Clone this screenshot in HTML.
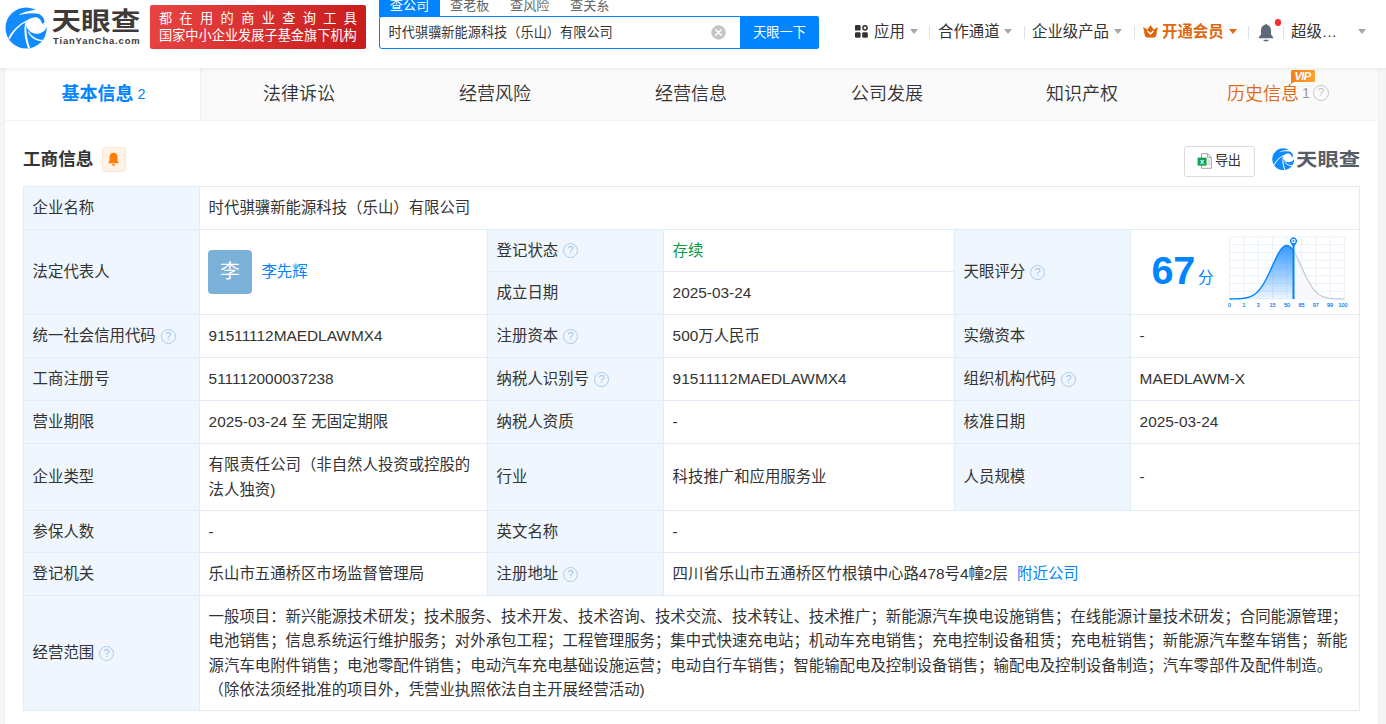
<!DOCTYPE html>
<html lang="zh-CN">
<head>
<meta charset="utf-8">
<title>天眼查</title>
<style>
*{box-sizing:border-box;margin:0;padding:0}
html,body{width:1386px;height:724px;overflow:hidden;background:#f5f5f5;font-family:"Liberation Sans","Noto Sans CJK SC",sans-serif;color:#333;font-size:14px}
.abs{position:absolute}
#hdr{position:absolute;left:0;top:0;width:1386px;height:68px;background:#fff;box-shadow:0 1px 5px rgba(0,0,0,.075);z-index:5}
#main{position:absolute;left:5px;top:68px;width:1373px;box-shadow:0 0 1px rgba(0,0,0,.12);height:660px;background:#fff}
#tabs{position:absolute;left:0;top:0;width:1373px;height:53px;background:#fafafa;border-bottom:1px solid #f3f3f3}
.tab{position:absolute;top:0;height:52px;width:196px;text-align:center;font-size:18px;line-height:53.4px;color:#333;white-space:nowrap;font-weight:350}
.tab.on{background:#fff;color:#0084ff;font-weight:bold;border-right:1px solid #f0f0f0;padding-left:2px}
.tab small{font-size:14.3px;font-weight:normal;margin-left:4px;position:relative;top:-1px}

.stab{top:-5px;font-size:13.2px;line-height:21.4px;color:#666;white-space:nowrap}
.nv{top:21px;font-size:15.4px;line-height:22px;color:#333;white-space:nowrap}
.ct{top:29px;width:0;height:0;border:4px solid transparent;border-top:5px solid #a6a6a6;border-bottom:0}
.sp{top:26px;width:1px;height:13px;background:#dde1e8}

.av{position:relative;top:-1px;margin-left:-.8px;display:inline-block;width:44px;height:44px;border-radius:4px;background:#7bb0d9;color:#fff;font-size:19.8px;line-height:42px;text-align:center;vertical-align:middle}
.nm{display:inline-block;vertical-align:middle;margin-left:9.6px}
.sc{font-size:39.6px;font-weight:bold;color:#0084ff;line-height:40px;margin-left:12px;letter-spacing:-.3px;vertical-align:middle;position:relative;top:-2.6px}
.fen{font-size:15.4px;color:#0084ff;margin-left:3px;vertical-align:middle;position:relative;top:6px}
/* table */
#tb{position:absolute;left:18px;top:118px;width:1336px;border-collapse:collapse;table-layout:fixed;font-size:15.4px;line-height:24.2px;color:#333}
#tb td{border:1px solid #e2ecf6;padding:1px 9px 0 8.6px;vertical-align:middle;background:#fff;white-space:nowrap}
#tb td.l{background:#eff6fd}
#tb td.w{white-space:normal}
.q{display:inline-block;width:15px;height:15px;border:1px solid #aacbec;border-radius:50%;vertical-align:-2px;margin-left:5px;position:relative;top:-3.5px;color:#9dc3ea;font-size:11px;line-height:13px;text-align:center;font-family:"Liberation Sans",sans-serif}
a{color:#0084ff;text-decoration:none}
</style>
</head>
<body>
<div id="hdr">

<svg class="abs" style="left:5px;top:6.5px" width="42" height="42" viewBox="0 0 42 42">
 <circle cx="21.1" cy="21" r="20.6" fill="#128bff"/>
 <path d="M13.5,8.2 C18.5,6.9 26,5.3 33.7,6.7 C37,8.3 39.3,11 39.5,14.4 C39.3,15.8 38.4,16.5 37.1,16.8 L43,19.4 L43,-1 L31.6,2.7 C25,3.5 18,4.9 13.5,8.2Z" fill="#fff"/>
 <path d="M21.7,13.8 C23.5,12 25.9,10.7 30.6,10.2 C33.5,10.2 36.2,12.6 37.1,16.8 L43,19.3 L43,19.9 L41.6,19.9 C40.6,23.5 37,26.7 31,26.7 C27,26.7 22.6,23.6 21.4,19.6 C21,17.6 21,15.6 21.7,13.8Z" fill="#fff"/>
 <path d="M21.9,13.3 C13,17.6 7,24 3.4,31 L4.7,32.5 C8.5,25 14,18.6 22.4,14.3Z M20.2,15.6 C18.5,24 19.9,33 23.1,41.2 L25.1,40.8 C22,33 20.6,24 21.7,15.6Z M22.7,24.4 C25,30.2 30.5,33.8 37,34.2 L37.9,32.8 C31.6,32.4 26.6,29.6 23.7,24.4Z" fill="#fff"/>
</svg>
<div class="abs" style="left:51.5px;top:0.5px;font-size:29.6px;line-height:42px;font-weight:700;color:#3e3a39;letter-spacing:0px;white-space:nowrap;transform:scaleY(.84);transform-origin:0 50%">天眼查</div>
<div class="abs" style="left:53px;top:35px;font-size:9.4px;line-height:12px;font-weight:bold;color:#3e3a39;letter-spacing:.86px;white-space:nowrap">TianYanCha.com</div>
<div class="abs" style="left:150px;top:5px;width:216px;height:44px;border-radius:2px;background:linear-gradient(105deg,#e84444,#c81b1b);color:#fff;font-size:13.2px;line-height:17.4px;font-weight:400;padding:4.6px 0 0 9px;white-space:nowrap">
 <div style="letter-spacing:7.35px">都在用的商业查询工具</div>
 <div>国家中小企业发展子基金旗下机构</div>
</div>
<div class="abs" style="left:379px;top:-5px;width:61px;height:22px;background:#0084ff;color:#fff;font-size:13.2px;line-height:21.4px;text-align:center;border-radius:2px 2px 0 0">查公司</div>
<div class="abs stab" style="left:450px">查老板</div>
<div class="abs stab" style="left:510px">查风险</div>
<div class="abs stab" style="left:570px">查关系</div>
<div class="abs" style="left:379px;top:16px;width:362px;height:33px;border:1px solid #0084ff;border-radius:3px 0 0 3px;font-size:13.2px;line-height:32.2px;padding-left:8.6px;color:#333;white-space:nowrap">时代骐骥新能源科技（乐山）有限公司</div>
<svg class="abs" style="left:711px;top:25px" width="15" height="15" viewBox="0 0 15 15"><circle cx="7.5" cy="7.5" r="7.2" fill="#c4c4c4"/><path d="M4.7,4.7 L10.3,10.3 M10.3,4.7 L4.7,10.3" stroke="#fff" stroke-width="1.5" stroke-linecap="round"/></svg>
<div class="abs" style="left:740px;top:16px;width:79px;height:33px;background:#0084ff;color:#fff;font-size:13.2px;line-height:33.4px;text-align:center;border-radius:0 2px 2px 0">天眼一下</div>
<svg class="abs" style="left:855px;top:25px" width="13" height="13" viewBox="0 0 13 13"><rect x="0" y="0" width="5.6" height="5.6" rx="1.2" fill="#333"/><rect x="0" y="7.2" width="5.6" height="5.6" rx="1.2" fill="#333"/><rect x="7.2" y="7.2" width="5.6" height="5.6" rx="1.2" fill="#333"/><circle cx="10" cy="2.8" r="2.1" fill="none" stroke="#333" stroke-width="1.5"/></svg>
<div class="abs nv" style="left:874px">应用</div><i class="abs ct" style="left:910px"></i><i class="abs sp" style="left:929px"></i>
<div class="abs nv" style="left:938px">合作通道</div><i class="abs ct" style="left:1004px"></i><i class="abs sp" style="left:1024px"></i>
<div class="abs nv" style="left:1032px">企业级产品</div><i class="abs ct" style="left:1114px"></i><i class="abs sp" style="left:1134px"></i>
<svg class="abs" style="left:1143px;top:25px" width="15" height="13" viewBox="0 0 15 13"><path d="M0.6,2.6 L4.3,4.9 L7.5,0.5 L10.7,4.9 L14.4,2.6 L12.9,10.6 Q12.7,12.2 11.2,12.2 L3.8,12.2 Q2.3,12.2 2.1,10.6Z" fill="#de650d" stroke="#de650d" stroke-width=".6" stroke-linejoin="round"/><path d="M5,6.4 L7.5,9 L10,6.4" fill="none" stroke="#fff" stroke-width="1.5" stroke-linecap="round" stroke-linejoin="round"/></svg>
<div class="abs nv" style="left:1162px;color:#e0670f;font-weight:bold">开通会员</div><i class="abs ct" style="left:1229px;border-top-color:#e0670f"></i><i class="abs sp" style="left:1248px"></i>
<svg class="abs" style="left:1257px;top:23px" width="18" height="20" viewBox="0 0 18 20"><path d="M9,0.8 C8.4,0.8 8.1,1.2 8.1,1.8 C5.4,2.4 4,4.8 4,7.6 L4,11.4 L1.7,14.4 L1.7,15.2 L16.3,15.2 L16.3,14.4 L14,11.4 L14,7.6 C14,4.8 12.6,2.4 9.9,1.8 C9.9,1.2 9.6,0.8 9,0.8Z" fill="#5e6978"/><rect x="6.5" y="16.8" width="5" height="1.5" rx=".7" fill="#5e6978"/></svg>
<i class="abs" style="left:1274.5px;top:19.2px;width:6.6px;height:6.6px;border-radius:50%;background:#ff2a2a"></i>
<i class="abs sp" style="left:1283px"></i>
<div class="abs nv" style="left:1291px">超级…</div><i class="abs ct" style="left:1358px"></i>

</div>
<div id="main">
 <div id="tabs">
  <div class="tab on" style="left:0">基本信息<small>2</small></div>
  <div class="tab" style="left:196px">法律诉讼</div>
  <div class="tab" style="left:392px">经营风险</div>
  <div class="tab" style="left:588px">经营信息</div>
  <div class="tab" style="left:784px">公司发展</div>
  <div class="tab" style="left:979px">知识产权</div>
  <div class="tab" style="left:1160px;color:#e0670f">历史信息</div>
  <div class="abs" style="left:1286px;top:2px;width:24px;height:12.4px;border-radius:1.5px;background:linear-gradient(100deg,#f47f17,#ffa335);color:#fff;font:italic bold 11px/12.4px 'Liberation Sans',sans-serif;text-align:center;letter-spacing:-.6px;padding-right:1px">VIP</div>
  <svg class="abs" style="left:1286px;top:13px" width="4" height="4" viewBox="0 0 4 4"><path d="M0,0 L3.2,0.9 L0,3Z" fill="#f47f17"/></svg>
  <div class="abs" style="left:1297px;top:15px;font-size:14.3px;line-height:20px;color:#999;font-family:'Liberation Sans',sans-serif">1</div>
  <div class="abs" style="left:1308px;top:16.8px;width:16px;height:16px;border:1.4px solid #c3cad2;border-radius:50%;color:#b9c1ca;font:11.5px/13.2px 'Liberation Sans',sans-serif;text-align:center">?</div>
 </div>
 
 <div class="abs" style="left:18px;top:78px;font-size:17.6px;line-height:26px;font-weight:bold;color:#333;white-space:nowrap">工商信息</div>
 <div class="abs" style="left:97px;top:79px;width:24px;height:25px;border:1px solid #ffe6d0;border-radius:3px;background:#fff3e8"></div>
 <svg class="abs" style="left:102.4px;top:83.6px" width="13" height="15" viewBox="0 0 12 14"><path d="M6,0.8 C3.6,0.8 2.3,2.6 2.3,5 L2.3,8 L1,10.4 L11,10.4 L9.7,8 L9.7,5 C9.7,2.6 8.4,0.8 6,0.8Z" fill="#ff7d0a"/><path d="M4.4,11.4 L7.6,11.4 C7.4,12.4 6.8,12.8 6,12.8 C5.2,12.8 4.6,12.4 4.4,11.4Z" fill="#ff7d0a"/></svg>
 <div class="abs" style="left:1179px;top:78px;width:71px;height:31px;border:1px solid #dcdcdc;border-radius:3px;background:#fff"></div>
 <svg class="abs" style="left:1191.6px;top:85px" width="16" height="16" viewBox="0 0 16 16"><path d="M4.5,0.7 L10.6,0.7 L14.3,4.4 L14.3,15.3 L4.5,15.3Z" fill="#fff" stroke="#9aa3ad" stroke-width="1"/><path d="M10.6,0.7 L10.6,4.4 L14.3,4.4" fill="none" stroke="#9aa3ad" stroke-width="1"/><path d="M10.5,7.2h2.4M10.5,9.2h2.4M10.5,11.2h2.4" stroke="#b9c0c8" stroke-width="1"/><rect x="0.6" y="4.6" width="9" height="8" fill="#13a14b"/><text x="5.1" y="11.2" font-family="Liberation Sans,sans-serif" font-weight="bold" font-size="7.4" fill="#fff" text-anchor="middle">x</text></svg>
 <div class="abs" style="left:1210px;top:81px;font-size:13.2px;line-height:24px;color:#333;white-space:nowrap;letter-spacing:-.4px">导出</div>
 <svg class="abs" style="left:1267px;top:80px" width="22.4" height="22.4" viewBox="0 0 42 42">
 <circle cx="21.1" cy="21" r="20.6" fill="#128bff"/>
 <path d="M13.5,8.2 C18.5,6.9 26,5.3 33.7,6.7 C37,8.3 39.3,11 39.5,14.4 C39.3,15.8 38.4,16.5 37.1,16.8 L43,19.4 L43,-1 L31.6,2.7 C25,3.5 18,4.9 13.5,8.2Z" fill="#fff"/>
 <path d="M21.7,13.8 C23.5,12 25.9,10.7 30.6,10.2 C33.5,10.2 36.2,12.6 37.1,16.8 L43,19.3 L43,19.9 L41.6,19.9 C40.6,23.5 37,26.7 31,26.7 C27,26.7 22.6,23.6 21.4,19.6 C21,17.6 21,15.6 21.7,13.8Z" fill="#fff"/>
 <path d="M21.9,13.3 C13,17.6 7,24 3.4,31 L4.7,32.5 C8.5,25 14,18.6 22.4,14.3Z M20.2,15.6 C18.5,24 19.9,33 23.1,41.2 L25.1,40.8 C22,33 20.6,24 21.7,15.6Z M22.7,24.4 C25,30.2 30.5,33.8 37,34.2 L37.9,32.8 C31.6,32.4 26.6,29.6 23.7,24.4Z" fill="#fff"/>
</svg>
 <div class="abs" style="left:1291px;top:78px;font-size:21.4px;line-height:28px;font-weight:700;color:#575d68;white-space:nowrap;transform:scaleY(.86);transform-origin:0 50%">天眼查</div>

 <table id="tb">
  <colgroup><col style="width:176px"><col style="width:288px"><col style="width:176px"><col style="width:291px"><col style="width:176px"><col style="width:229px"></colgroup>
  <tr style="height:43px"><td class="l">企业名称</td><td colspan="5">时代骐骥新能源科技（乐山）有限公司</td></tr>
  <tr style="height:42px"><td class="l" rowspan="2">法定代表人</td><td rowspan="2"><span class="av">李</span><a class="nm">李先辉</a></td><td class="l">登记状态<span class="q">?</span></td><td style="color:#089944">存续</td><td class="l" rowspan="2">天眼评分<span class="q">?</span></td><td rowspan="2"><span class="sc">67</span><span class="fen">分</span></td></tr>
  <tr style="height:43px"><td class="l">成立日期</td><td>2025-03-24</td></tr>
  <tr style="height:43px"><td class="l">统一社会信用代码<span class="q">?</span></td><td>91511112MAEDLAWMX4</td><td class="l">注册资本<span class="q">?</span></td><td>500万人民币</td><td class="l">实缴资本</td><td>-</td></tr>
  <tr style="height:43px"><td class="l">工商注册号</td><td>511112000037238</td><td class="l">纳税人识别号<span class="q">?</span></td><td>91511112MAEDLAWMX4</td><td class="l">组织机构代码<span class="q">?</span></td><td>MAEDLAWM-X</td></tr>
  <tr style="height:43px"><td class="l">营业期限</td><td>2025-03-24 至 无固定期限</td><td class="l">纳税人资质</td><td>-</td><td class="l">核准日期</td><td>2025-03-24</td></tr>
  <tr style="height:67px"><td class="l">企业类型</td><td class="w">有限责任公司（非自然人投资或控股的法人独资)</td><td class="l">行业</td><td>科技推广和应用服务业</td><td class="l">人员规模</td><td>-</td></tr>
  <tr style="height:42px"><td class="l">参保人数</td><td>-</td><td class="l">英文名称</td><td colspan="3">-</td></tr>
  <tr style="height:43px"><td class="l">登记机关</td><td>乐山市五通桥区市场监督管理局</td><td class="l">注册地址<span class="q">?</span></td><td colspan="3">四川省乐山市五通桥区竹根镇中心路478号4幢2层 <a style="margin-left:5px">附近公司</a></td></tr>
  <tr style="height:115px"><td class="l">经营范围<span class="q">?</span></td><td colspan="5" class="w">一般项目：新兴能源技术研发；技术服务、技术开发、技术咨询、技术交流、技术转让、技术推广；新能源汽车换电设施销售；在线能源计量技术研发；合同能源管理；电池销售；信息系统运行维护服务；对外承包工程；工程管理服务；集中式快速充电站；机动车充电销售；充电控制设备租赁；充电桩销售；新能源汽车整车销售；新能源汽车电附件销售；电池零配件销售；电动汽车充电基础设施运营；电动自行车销售；智能输配电及控制设备销售；输配电及控制设备制造；汽车零部件及配件制造。（除依法须经批准的项目外，凭营业执照依法自主开展经营活动)</td></tr>
 </table>
<svg class="abs" style="left:1220px;top:162px;overflow:visible" width="125" height="80" viewBox="-4.5 -7 125 80">
<defs><linearGradient id="g1" x1="0" y1="0" x2="0" y2="1"><stop offset="0" stop-color="#2c94ff" stop-opacity=".95"/><stop offset="1" stop-color="#2c94ff" stop-opacity=".08"/></linearGradient></defs>
<g stroke="#e9f1fb" stroke-width="1" fill="none"><path d="M0.00,0V62"/><path d="M0,0.00H115"/><path d="M14.38,0V62"/><path d="M0,7.75H115"/><path d="M28.75,0V62"/><path d="M0,15.50H115"/><path d="M43.12,0V62"/><path d="M0,23.25H115"/><path d="M57.50,0V62"/><path d="M0,31.00H115"/><path d="M71.88,0V62"/><path d="M0,38.75H115"/><path d="M86.25,0V62"/><path d="M0,46.50H115"/><path d="M100.62,0V62"/><path d="M0,54.25H115"/><path d="M115.00,0V62"/><path d="M0,62.00H115"/></g>
<path d="M0.0,62.0 L0.5,62.0 L1.0,62.0 L1.5,62.0 L2.0,62.0 L2.5,62.0 L3.0,61.9 L3.5,61.9 L4.0,61.9 L4.5,61.9 L5.0,61.9 L5.5,61.9 L6.0,61.9 L6.5,61.9 L7.0,61.9 L7.5,61.8 L8.0,61.8 L8.5,61.8 L9.0,61.8 L9.5,61.7 L10.0,61.7 L10.5,61.7 L11.0,61.6 L11.5,61.6 L12.0,61.6 L12.5,61.5 L13.0,61.5 L13.5,61.4 L14.0,61.3 L14.5,61.3 L15.0,61.2 L15.5,61.1 L16.0,61.0 L16.5,60.9 L17.0,60.8 L17.5,60.7 L18.0,60.5 L18.5,60.4 L19.0,60.3 L19.5,60.1 L20.0,59.9 L20.5,59.7 L21.0,59.5 L21.5,59.3 L22.0,59.1 L22.5,58.8 L23.0,58.6 L23.5,58.3 L24.0,58.0 L24.5,57.6 L25.0,57.3 L25.5,56.9 L26.0,56.5 L26.5,56.1 L27.0,55.7 L27.5,55.2 L28.0,54.8 L28.5,54.3 L29.0,53.7 L29.5,53.2 L30.0,52.6 L30.5,52.0 L31.0,51.3 L31.5,50.6 L32.0,49.9 L32.5,49.2 L33.0,48.5 L33.5,47.7 L34.0,46.9 L34.5,46.0 L35.0,45.2 L35.5,44.3 L36.0,43.4 L36.5,42.4 L37.0,41.5 L37.5,40.5 L38.0,39.5 L38.5,38.4 L39.0,37.4 L39.5,36.3 L40.0,35.3 L40.5,34.2 L41.0,33.1 L41.5,32.0 L42.0,30.9 L42.5,29.8 L43.0,28.7 L43.5,27.6 L44.0,26.4 L44.5,25.4 L45.0,24.3 L45.5,23.2 L46.0,22.1 L46.5,21.1 L47.0,20.1 L47.5,19.1 L48.0,18.1 L48.5,17.2 L49.0,16.3 L49.5,15.4 L50.0,14.6 L50.5,13.8 L51.0,13.1 L51.5,12.4 L52.0,11.8 L52.5,11.2 L53.0,10.7 L53.5,10.2 L54.0,9.8 L54.5,9.4 L55.0,9.1 L55.5,8.9 L56.0,8.7 L56.5,8.6 L57.0,8.5 L57.5,8.5 L58.0,8.6 L58.5,8.7 L59.0,8.9 L59.5,9.2 L60.0,9.5 L60.5,9.8 L61.0,10.3 L61.5,10.8 L62.0,11.3 L62.5,11.9 L63.0,12.6 L63.5,13.3 L64.0,14.0 L64.0,62 L0,62 Z" fill="url(#g1)"/>
<path d="M64.0,14.0 L64.5,14.8 L65.0,15.6 L65.5,16.5 L66.0,17.4 L66.5,18.3 L67.0,19.3 L67.5,20.3 L68.0,21.3 L68.5,22.3 L69.0,23.4 L69.5,24.5 L70.0,25.6 L70.5,26.7 L71.0,27.8 L71.5,28.9 L72.0,30.0 L72.5,31.1 L73.0,32.2 L73.5,33.3 L74.0,34.4 L74.5,35.5 L75.0,36.6 L75.5,37.6 L76.0,38.6 L76.5,39.7 L77.0,40.7 L77.5,41.7 L78.0,42.6 L78.5,43.5 L79.0,44.5 L79.5,45.3 L80.0,46.2 L80.5,47.0 L81.0,47.8 L81.5,48.6 L82.0,49.4 L82.5,50.1 L83.0,50.8 L83.5,51.4 L84.0,52.1 L84.5,52.7 L85.0,53.3 L85.5,53.8 L86.0,54.4 L86.5,54.9 L87.0,55.3 L87.5,55.8 L88.0,56.2 L88.5,56.6 L89.0,57.0 L89.5,57.4 L90.0,57.7 L90.5,58.0 L91.0,58.3 L91.5,58.6 L92.0,58.9 L92.5,59.1 L93.0,59.4 L93.5,59.6 L94.0,59.8 L94.5,60.0 L95.0,60.1 L95.5,60.3 L96.0,60.4 L96.5,60.6 L97.0,60.7 L97.5,60.8 L98.0,60.9 L98.5,61.0 L99.0,61.1 L99.5,61.2 L100.0,61.3 L100.5,61.3 L101.0,61.4 L101.5,61.5 L102.0,61.5 L102.5,61.6 L103.0,61.6 L103.5,61.6 L104.0,61.7 L104.5,61.7 L105.0,61.7 L105.5,61.8 L106.0,61.8 L106.5,61.8 L107.0,61.8 L107.5,61.9 L108.0,61.9 L108.5,61.9 L109.0,61.9 L109.5,61.9 L110.0,61.9 L110.5,61.9 L111.0,61.9 L111.5,61.9 L112.0,62.0 L112.5,62.0 L113.0,62.0 L113.5,62.0 L114.0,62.0 L114.5,62.0 L115.0,62.0 L115,62 L64.0,62 Z" fill="#f7f8fa" fill-opacity=".8"/>
<path d="M64.0,14.0 L64.5,14.8 L65.0,15.6 L65.5,16.5 L66.0,17.4 L66.5,18.3 L67.0,19.3 L67.5,20.3 L68.0,21.3 L68.5,22.3 L69.0,23.4 L69.5,24.5 L70.0,25.6 L70.5,26.7 L71.0,27.8 L71.5,28.9 L72.0,30.0 L72.5,31.1 L73.0,32.2 L73.5,33.3 L74.0,34.4 L74.5,35.5 L75.0,36.6 L75.5,37.6 L76.0,38.6 L76.5,39.7 L77.0,40.7 L77.5,41.7 L78.0,42.6 L78.5,43.5 L79.0,44.5 L79.5,45.3 L80.0,46.2 L80.5,47.0 L81.0,47.8 L81.5,48.6 L82.0,49.4 L82.5,50.1 L83.0,50.8 L83.5,51.4 L84.0,52.1 L84.5,52.7 L85.0,53.3 L85.5,53.8 L86.0,54.4 L86.5,54.9 L87.0,55.3 L87.5,55.8 L88.0,56.2 L88.5,56.6 L89.0,57.0 L89.5,57.4 L90.0,57.7 L90.5,58.0 L91.0,58.3 L91.5,58.6 L92.0,58.9 L92.5,59.1 L93.0,59.4 L93.5,59.6 L94.0,59.8 L94.5,60.0 L95.0,60.1 L95.5,60.3 L96.0,60.4 L96.5,60.6 L97.0,60.7 L97.5,60.8 L98.0,60.9 L98.5,61.0 L99.0,61.1 L99.5,61.2 L100.0,61.3 L100.5,61.3 L101.0,61.4 L101.5,61.5 L102.0,61.5 L102.5,61.6 L103.0,61.6 L103.5,61.6 L104.0,61.7 L104.5,61.7 L105.0,61.7 L105.5,61.8 L106.0,61.8 L106.5,61.8 L107.0,61.8 L107.5,61.9 L108.0,61.9 L108.5,61.9 L109.0,61.9 L109.5,61.9 L110.0,61.9 L110.5,61.9 L111.0,61.9 L111.5,61.9 L112.0,62.0 L112.5,62.0 L113.0,62.0 L113.5,62.0 L114.0,62.0 L114.5,62.0 L115.0,62.0" fill="none" stroke="#b9c9da" stroke-width="1.1"/>
<path d="M0.0,62.0 L0.5,62.0 L1.0,62.0 L1.5,62.0 L2.0,62.0 L2.5,62.0 L3.0,61.9 L3.5,61.9 L4.0,61.9 L4.5,61.9 L5.0,61.9 L5.5,61.9 L6.0,61.9 L6.5,61.9 L7.0,61.9 L7.5,61.8 L8.0,61.8 L8.5,61.8 L9.0,61.8 L9.5,61.7 L10.0,61.7 L10.5,61.7 L11.0,61.6 L11.5,61.6 L12.0,61.6 L12.5,61.5 L13.0,61.5 L13.5,61.4 L14.0,61.3 L14.5,61.3 L15.0,61.2 L15.5,61.1 L16.0,61.0 L16.5,60.9 L17.0,60.8 L17.5,60.7 L18.0,60.5 L18.5,60.4 L19.0,60.3 L19.5,60.1 L20.0,59.9 L20.5,59.7 L21.0,59.5 L21.5,59.3 L22.0,59.1 L22.5,58.8 L23.0,58.6 L23.5,58.3 L24.0,58.0 L24.5,57.6 L25.0,57.3 L25.5,56.9 L26.0,56.5 L26.5,56.1 L27.0,55.7 L27.5,55.2 L28.0,54.8 L28.5,54.3 L29.0,53.7 L29.5,53.2 L30.0,52.6 L30.5,52.0 L31.0,51.3 L31.5,50.6 L32.0,49.9 L32.5,49.2 L33.0,48.5 L33.5,47.7 L34.0,46.9 L34.5,46.0 L35.0,45.2 L35.5,44.3 L36.0,43.4 L36.5,42.4 L37.0,41.5 L37.5,40.5 L38.0,39.5 L38.5,38.4 L39.0,37.4 L39.5,36.3 L40.0,35.3 L40.5,34.2 L41.0,33.1 L41.5,32.0 L42.0,30.9 L42.5,29.8 L43.0,28.7 L43.5,27.6 L44.0,26.4 L44.5,25.4 L45.0,24.3 L45.5,23.2 L46.0,22.1 L46.5,21.1 L47.0,20.1 L47.5,19.1 L48.0,18.1 L48.5,17.2 L49.0,16.3 L49.5,15.4 L50.0,14.6 L50.5,13.8 L51.0,13.1 L51.5,12.4 L52.0,11.8 L52.5,11.2 L53.0,10.7 L53.5,10.2 L54.0,9.8 L54.5,9.4 L55.0,9.1 L55.5,8.9 L56.0,8.7 L56.5,8.6 L57.0,8.5 L57.5,8.5 L58.0,8.6 L58.5,8.7 L59.0,8.9 L59.5,9.2 L60.0,9.5 L60.5,9.8 L61.0,10.3 L61.5,10.8 L62.0,11.3 L62.5,11.9 L63.0,12.6 L63.5,13.3 L64.0,14.0" fill="none" stroke="#0084ff" stroke-width="1.4"/>
<path d="M64.0,9 V62" stroke="#0084ff" stroke-width="2"/>
<path d="M64.0,10.4 L61.3,6.2 A3.5,3.5 0 1 1 66.7,6.2 Z" fill="#0084ff"/>
<circle cx="64.0" cy="4" r="2.2" fill="#fff"/><circle cx="64.0" cy="4" r="1" fill="#0084ff"/>
<g font-family="Liberation Sans,sans-serif" font-size="5.4" fill="#0078f0" stroke="#0084ff" stroke-width=".15"><text x="0.0" y="69.6" text-anchor="middle">0</text><text x="14.4" y="69.6" text-anchor="middle">1</text><text x="28.8" y="69.6" text-anchor="middle">3</text><text x="43.1" y="69.6" text-anchor="middle">15</text><text x="57.5" y="69.6" text-anchor="middle">50</text><text x="71.9" y="69.6" text-anchor="middle">85</text><text x="86.2" y="69.6" text-anchor="middle">97</text><text x="100.6" y="69.6" text-anchor="middle">99</text><text x="113.5" y="69.6" text-anchor="middle">100</text></g>
</svg>
</div>
</body>
</html>
